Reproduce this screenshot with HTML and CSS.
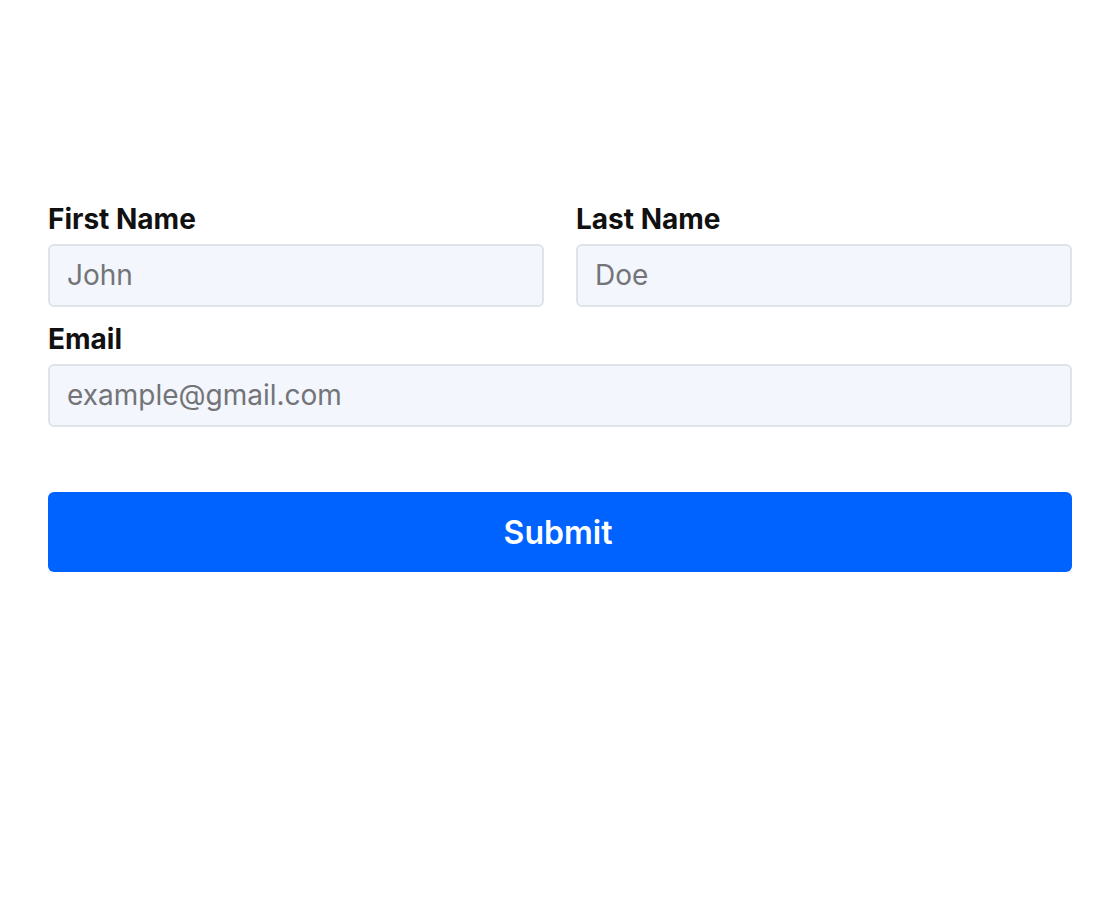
FILE: index.html
```html
<!DOCTYPE html>
<html lang="en">
<head>
<meta charset="utf-8">
<title>Form</title>
<link rel="stylesheet" href="styles.css">
</head>
<body>
<form class="form">
  <div class="row two">
    <div class="field">
      <label class="label" for="first">First Name</label>
      <input class="input" id="first" type="text" placeholder="John">
    </div>
    <div class="field">
      <label class="label" for="last">Last Name</label>
      <input class="input" id="last" type="text" placeholder="Doe">
    </div>
  </div>
  <div class="field">
    <label class="label" for="email">Email</label>
    <input class="input" id="email" type="email" placeholder="example@gmail.com">
  </div>
  <button class="submit" type="button">Submit</button>
</form>
</body>
</html>
```

FILE: styles.css
```css
* { box-sizing: border-box; }
html, body { margin: 0; background: #ffffff; }
body {
  font-family: Inter, "Noto Sans", sans-serif;
  color: #111111;
}
.form {
  padding: 204px 48px 0 48px;
  display: flex;
  flex-direction: column;
}
.row.two {
  display: grid;
  grid-template-columns: 1fr 1fr;
  column-gap: 32px;
  margin-bottom: 17px;
}
.field {
  display: flex;
  flex-direction: column;
}
.label {
  font-size: 28px;
  font-weight: 700;
  line-height: 30px;
  margin-bottom: 10px;
  color: #111111;
}
.input {
  height: 63px;
  border: 2px solid #e1e3ea;
  border-radius: 6px;
  background: #f3f6fd;
  padding: 0 17px 2px 17px;
  font-family: Inter, "Noto Sans", sans-serif;
  font-size: 28px;
  color: #111;
  outline: none;
}
.input::placeholder { color: #737478; }
.submit {
  margin-top: 65px;
  height: 80px;
  border: none;
  border-radius: 6px;
  background: #0062ff;
  color: #ffffff;
  padding: 0 4px 0 0;
  font-family: Inter, "Noto Sans", sans-serif;
  font-size: 32px;
  font-weight: 600;
  cursor: pointer;
}
```
